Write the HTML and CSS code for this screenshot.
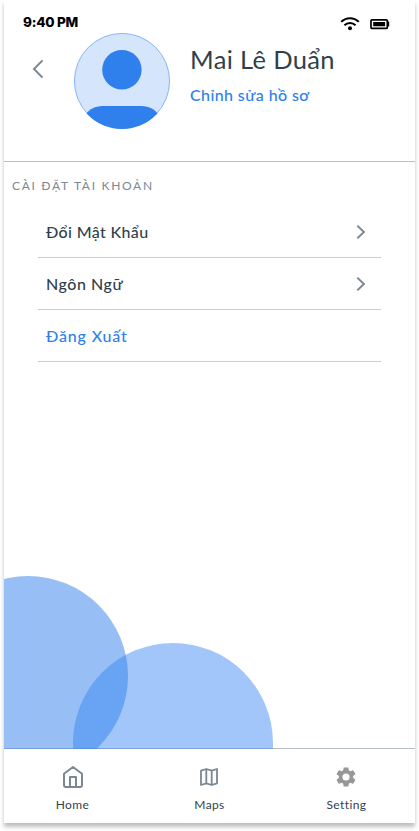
FILE: index.html
```html
<!DOCTYPE html>
<html lang="vi">
<head>
<meta charset="utf-8">
<title>Cài đặt tài khoản</title>
<link rel="stylesheet" href="styles.css">
</head>
<body>
<div class="screen">
  <header class="header">
    <div class="status">
      <span class="time">9:40 PM</span>
      <svg class="wifi" width="20" height="14" viewBox="0 0 20 14" fill="none" stroke="#000" stroke-width="2"><path d="M1.2 4.8C6.2-.1 13.8-.1 18.8 4.8M4.4 8.2c3.2-3 8-3 11.2 0"/><circle cx="10" cy="11.3" r="2" fill="#000" stroke="none"/></svg>
      <svg class="battery" width="20" height="12" viewBox="0 0 20 12"><rect x="1" y="1.8" width="16.3" height="8.6" rx="1" fill="none" stroke="#000" stroke-width="1.7"/><path d="M3.2 4h11.9v4.2H3.2zM18 3.6h1.2v4.8H18z"/></svg>
    </div>
    <div class="profile">
      <svg class="back" width="12" height="20" viewBox="0 0 12 20" fill="none" stroke="#7b8794" stroke-width="2"><path d="M10.5 1.4 2 10l8.500 8.600"/></svg>
      <svg class="avatar" width="96" height="96" viewBox="0 0 96 96">
        <clipPath id="face"><circle cx="48" cy="48" r="48"/></clipPath>
        <circle cx="48" cy="48" r="47.600" fill="#d5e5fb" stroke="#6fa7f3" stroke-width=".8"/>
        <g clip-path="url(#face)" fill="#2f80ed"><circle cx="47.900" cy="36.700" r="19.700"/><rect x="8" y="73" width="80" height="50" rx="20"/></g>
      </svg>
      <div class="identity">
        <h1 class="name">Mai Lê Duẩn</h1>
        <a class="edit">Chỉnh sửa hồ sơ</a>
      </div>
    </div>
  </header>
  <main class="settings">
    <h2 class="caption">CÀI ĐẶT TÀI KHOẢN</h2>
    <div class="list">
      <div class="row"><span class="password">Đổi Mật Khẩu</span><svg width="10" height="16" viewBox="0 0 10 16" fill="none" stroke="#7b8794" stroke-width="2"><path d="m1.300 1.600 6.600 6.400-6.600 6.400"/></svg></div>
      <div class="row"><span class="language">Ngôn Ngữ</span><svg width="10" height="16" viewBox="0 0 10 16" fill="none" stroke="#7b8794" stroke-width="2"><path d="m1.300 1.600 6.600 6.400-6.600 6.400"/></svg></div>
      <div class="row"><span class="logout">Đăng Xuất</span></div>
    </div>
  </main>
  <svg class="bubbles" width="411" height="175" viewBox="0 0 411 175"><circle cx="169" cy="169" r="100" fill="#3080f4" fill-opacity=".45"/><circle cx="24" cy="102" r="100" fill="#2f80ed" fill-opacity=".5"/></svg>
  <nav class="nav">
    <a class="tab">
      <svg class="house" width="24" height="24" viewBox="0 0 24 24" fill="none" stroke="#7b8794" stroke-width="2" stroke-linejoin="round"><path d="M3 8.800 12 2l9 6.800V20a2 2 0 0 1-2 2H5a2 2 0 0 1-2-2zM9 22V12h6v10"/></svg>
      <span class="home">Home</span>
    </a>
    <a class="tab">
      <svg width="24" height="24" viewBox="0 0 24 24" fill="none" stroke="#7b8794" stroke-width="1.800" stroke-linejoin="round"><path d="M4 5.700 9.300 4l5.400 1.700L20 4v14.300L14.700 20l-5.400-1.700L4 20zM9.300 4v14.300M14.700 5.700V20"/></svg>
      <span class="maps">Maps</span>
    </a>
    <a class="tab">
      <svg width="24" height="24" viewBox="0 0 24 24" fill="#979797"><path d="M19.140 12.940c.04-.3.060-.61.060-.94s-.02-.64-.07-.94l2.030-1.580c.18-.14.230-.41.120-.61l-1.920-3.320c-.12-.22-.37-.29-.59-.22l-2.390.96c-.5-.38-1.030-.7-1.620-.94l-.36-2.540c-.04-.24-.24-.41-.48-.41h-3.840c-.24 0-.43.170-.47.410l-.36 2.540c-.59.240-1.130.57-1.620.94l-2.390-.96c-.22-.08-.47 0-.59.220L2.740 8.870c-.12.210-.08.470.120.610l2.030 1.580c-.05.3-.09.630-.09.940s.02.640.070.940l-2.030 1.580c-.18.140-.23.410-.12.610l1.920 3.320c.12.220.37.290.59.220l2.390-.96c.5.380 1.030.7 1.620.94l.36 2.540c.05.240.24.410.48.410h3.840c.24 0 .44-.17.470-.41l.36-2.540c.59-.24 1.130-.56 1.620-.94l2.390.96c.22.080.47 0 .59-.22l1.920-3.320c.12-.22.070-.47-.12-.61zM12 15.600A3.600 3.600 0 1 1 12 8.400a3.600 3.600 0 0 1 0 7.200z"/></svg>
      <span class="setting">Setting</span>
    </a>
  </nav>
</div>
</body>
</html>
```
FILE: styles.css
```css
* { box-sizing: border-box; }
body { margin: 0; min-height: 831px; background: #fff; font-family: Lato, "Open Sans", sans-serif; color: #323f4b; }
h1, h2 { margin: 0; font-weight: 400; }
svg { display: block; flex: none; }
span, a, h1, h2 { white-space: nowrap; }
.screen { display: flex; flex-direction: column; width: 411px; height: 823px; margin: 0 4px; background: #fff; box-shadow: 0 4px 4px rgba(0,0,0,.25); }
.header { height: 162px; border-bottom: 1px solid #bdbfc3; }
.status { display: flex; height: 33px; padding: 12px 25px 0 19px; }
.time { font: 800 13.5px/20px Inter, sans-serif; color: #000; letter-spacing: -.25px; margin-right: auto; }
.wifi { margin-top: 5px; }
.battery { margin: 6px 0 0 10px; }
.profile { display: flex; padding-left: 28px; }
.back { margin-top: 26px; }
.avatar { margin-left: 30px; }
.identity { display: flex; flex-direction: column; align-items: flex-start; padding: 9px 0 0 20px; }
.name { font-size: 25.5px; line-height: 34px; letter-spacing: .35px; }
.edit { margin-top: 9px; font-size: 16px; line-height: 20px; font-weight: 500; color: #2f80ed; letter-spacing: .4px; }
.settings { height: 412px; }
.caption { padding: 14px 8px 0; height: 44px; font-size: 12px; line-height: 20px; letter-spacing: 1.700px; color: #7b8794; }
.list { margin: 0 34px; }
.row { display: flex; align-items: center; justify-content: space-between; height: 52px; padding: 0 15px 0 8px; border-bottom: 1px solid #cbccd1; font-size: 16px; font-weight: 500; letter-spacing: .35px; }
.language { letter-spacing: .55px; }
.logout { color: #2f80ed; letter-spacing: .85px; }
.bubbles { position: relative; z-index: 1; margin-bottom: -1px; }
.nav { display: flex; height: 75px; border-top: 1px solid #b8bec8; }
.tab { flex: 1; display: flex; flex-direction: column; align-items: center; padding: 16px 0 0; font-size: 12px; line-height: 16px; letter-spacing: .4px; }
.tab svg { margin-right: 1px; }
.tab .house { margin: 0 0 0 1px; }
.tab span { margin-top: 8px; }
```
